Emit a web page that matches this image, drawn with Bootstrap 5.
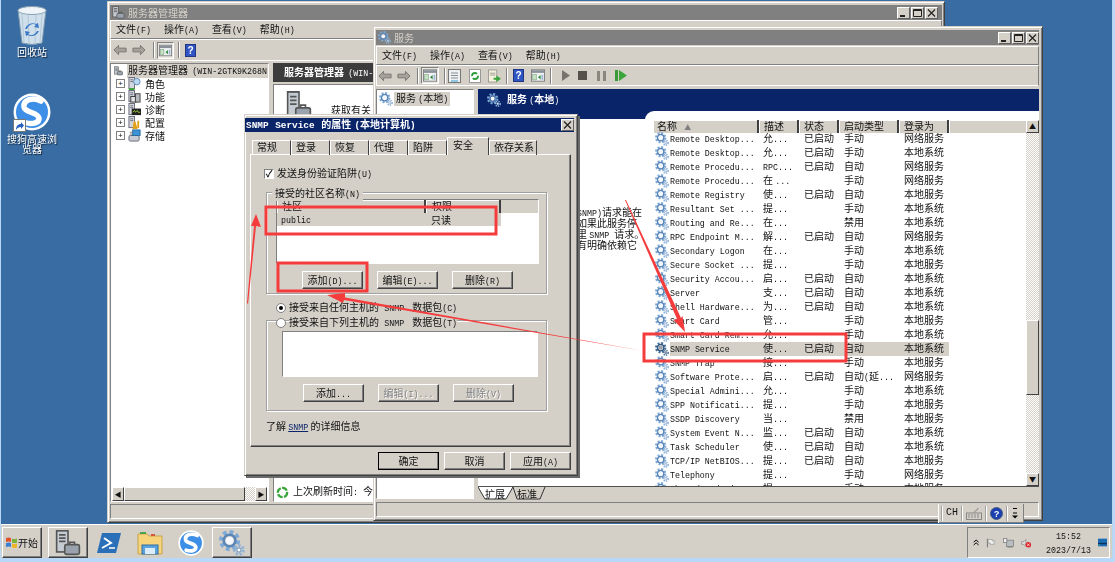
<!DOCTYPE html>
<html lang="zh-CN">
<head>
<meta charset="UTF-8" />
<title>SNMP Service</title>
<link href="https://cdn.jsdelivr.net/npm/bootstrap@5.3.0/dist/css/bootstrap.min.css" rel="stylesheet">
<style>
  html, body { margin: 0; height: 100%; overflow: hidden; }
  body { background: #b9d7f7; font: 10px/12px "Noto Sans CJK SC", sans-serif; color: #111; }
  .lat { font: 8.3px/12px "Liberation Mono", monospace; }
  .screen { width: 1115px; height: 562px; padding: 0 3px 4px 1px; filter: blur(.3px); }
  .desk { height: 524px; background: #396ca3; }
  .deskitem { left: 0; width: 62px; color: #fff; text-align: center; text-shadow: 1px 1px 1px #123; }

  .win { background: #d4d0c8; border: 1px solid; border-color: #d4d0c8 #404040 #404040 #d4d0c8; box-shadow: inset 1px 1px #fff, inset -1px -1px #808080; padding: 3px 2px; }
  .win-sm { left: 106px; top: 1px; width: 838px; height: 522px; }
  .win-svc { left: 372px; top: 26px; width: 670px; height: 495px; padding-right: 3px; }
  .tbar { height: 15px; flex: none; background: #808080; color: #d4d0c8; padding-left: 2px; gap: 3px; }
  .wbtn { width: 13px; height: 12px; background: #d4d0c8; border: 1px solid; border-color: #fff #606060 #606060 #fff; padding: 0; display: flex; align-items: center; justify-content: center; }
  .wbtns { gap: 1px; }
  .mbar { height: 19px; flex: none; border: 1px solid; border-color: #fff #808080 #808080 #fff; padding-left: 5px; gap: 13px; }
  .tools { flex: none; border: 1px solid; border-color: #fff #808080 #fff #fff; }
  .sep { width: 2px; height: 16px; border-left: 1px solid #808080; border-right: 1px solid #fff; flex: none; }
  .pressed { background: #e8e6e0; border: 1px solid; border-color: #808080 #fff #fff #808080; padding: 1px; }
  .sunk { background: #fff; border: 1px solid; border-color: #808080 #fff #fff #808080; }
  .status { height: 15px; flex: none; border: 1px solid; border-color: #808080 #fff #fff #808080; }
  .tree-row { height: 13px; padding-left: 5px; }
  .expand { width: 9px; height: 9px; border: 1px solid #808080; font: 8px/7px "Liberation Mono", monospace; text-align: center; margin-right: 3px; background: #fff; }
  .smhead { height: 19px; background: #3c3c3c; color: #fff; font-weight: 700; padding-left: 11px; word-spacing: 2px; }
  .sbtn { background: #d4d0c8; border: 1px solid; border-color: #fff #404040 #404040 #fff; flex: none; }
  .track { background-color: #e8e6e0; background-image: repeating-conic-gradient(#d4d0c8 0 25%, #fff 0 50%); background-size: 2px 2px; }

  .navyhead { height: 22px; background: #0a246a; color: #fff; font-weight: 700; padding-left: 9px; gap: 6px; flex: none; }
  .descol { width: 167px; flex: none; }
  .descol-top { height: 8px; background: #0a246a; }
  .desc-text { padding: 87px 0 0 99px; white-space: nowrap; overflow: hidden; }
  .desc-line { height: 11px; line-height: 11px; }
  .desc-line .lat { line-height: 11px; }
  .listwrap { background: #0a246a; }
  .listbox { background: #fff; border-top-left-radius: 9px; padding-top: 9px; }
  .lhead { height: 13px; background: #d4d0c8; flex: none; }
  .lh { height: 13px; line-height: 11px; border-right: 2px solid #404040; padding-left: 5px; box-shadow: inset 1px 1px #fff; }
  .lrow { height: 14px; flex: none; white-space: nowrap; }
  .hd1 { width: 106px; padding-left: 4px; } .hd2 { width: 40px; } .hd3 { width: 40px; } .hd4 { width: 60px; } .hd5 { width: 50px; }
  .r1 { width: 105px; } .r2 { width: 41px; } .r3 { width: 40px; } .r4 { width: 60px; } .r5 { width: 51px; }
  .lcell { padding-left: 6px; flex: none; }
  .ic1 { padding-left: 3px; gap: 1px; }
  .selbg { background: #d4d0c8; }
  .gear-sel { filter: brightness(.65) saturate(1.4); }
  .tabrow { height: 13px; flex: none; border-top: 1px solid #505050; padding-top: 1px; }

  .dlg { left: 243px; top: 114px; width: 334px; height: 362px; background: #d4d0c8; border: 1px solid; border-color: #d4d0c8 #404040 #404040 #d4d0c8; box-shadow: inset 1px 1px #fff, inset -1px -1px #808080, 2px 2px 0 #6a6a6a; padding: 3px 3px 3px 0; }
  .dlgtitle { height: 14px; background: #0a246a; color: #fff; font-weight: 700; padding-left: 1px; word-spacing: 1px; }
  .dlgtitle .lat { font-weight: 700; font-size: 9.400px; }
  .dtabs { margin: 5px 0 0 7px; height: 17px; position: relative; z-index: 1; }
  .dtab { width: 39px; height: 15px; margin-top: 3px; border: 1px solid; border-color: #fff #404040 transparent #fff; border-bottom: 0; padding-left: 4px; line-height: 12px; flex: none; }
  .dtab-on { height: 18px; margin-top: 0; width: 42px; background: #d4d0c8; line-height: 14px; padding-left: 5px; }
  .dtab-wide { width: 48px; }
  .dpanel { margin: 0 0 0 5px; width: 321px; height: 293px; border: 1px solid; border-color: #fff #404040 #404040 #fff; box-shadow: inset -1px -1px #808080; padding-top: 13px; }
  .chk { width: 10px; height: 10px; background: #fff; border: 1px solid; border-color: #808080 #fff #fff #808080; font: bold 9px/8px "Liberation Sans", sans-serif; text-align: center; margin-right: 3px; }
  .grp { margin-left: 15px; width: 281px; border: 1px solid #a0a0a0; box-shadow: 1px 1px #fff, inset 1px 1px #fff; padding-left: 9px; }
  .grp-a { margin-top: 12px; height: 102px; padding-top: 6px; }
  .grp-b { margin-top: -9px; height: 91px; padding-top: 10px; }
  .legend { left: 5px; top: -6px; background: #d4d0c8; padding: 0 3px; }
  .lv { width: 263px; height: 65px; }
  .lvh { height: 13px; background: #d4d0c8; }
  .lvsel { height: 13px; width: 224px; background: #d4d0c8; }
  .xbtn { height: 18px; width: 61px; background: #d4d0c8; border: 1px solid; border-color: #fff #404040 #404040 #fff; box-shadow: inset -1px -1px #808080; text-align: center; line-height: 14px; padding: 0; color: #111; font-size: 10px; }
  .xbtn-off { color: #808080; text-shadow: 1px 1px #fff; }
  .xbtn-def { outline: 1px solid #000; outline-offset: -1px; border-color: #fff #000 #000 #fff; }
  .radio { width: 10px; height: 10px; border-radius: 50%; background: #fff; border: 1px solid #808080; margin-right: 3px; position: relative; flex: none; }
  .radio-on::after { content: ""; position: absolute; left: 2px; top: 2px; width: 4px; height: 4px; border-radius: 50%; background: #000; }
  .rrow { height: 13px; padding-left: 25px; position: relative; z-index: 1; width: max-content; word-spacing: 3px; }
  .rrow-b { margin-top: 2px; }
  .rrow > span:last-child { background: #d4d0c8; }
  .snmplink { color: #0a246a; text-decoration: underline; }

  .langbar { left: 938px; top: 504px; width: 85px; height: 19px; background: #d4d0c8; gap: 3px; padding-left: 2px; border-right: 1px solid #808080; border-bottom: 1px solid #808080; box-shadow: -1px 0 #fff; }
  .langbar .lat { font-size: 10px; width: 12px; display: block; }
  .langsep { width: 2px; height: 15px; border-left: 1px solid #a0a0a0; border-right: 1px solid #fff; }
  .taskbar { height: 34px; background: #d4d0c8; box-shadow: inset 0 1px #fff, 0 -1px #9a9a9a; padding: 3px 2px 0 1px; }
  .tb { height: 31px; background: #d4d0c8; border: 1px solid; border-color: #fff #404040 #404040 #fff; box-shadow: inset -1px -1px #808080; }
  .tray { width: 143px; height: 31px; border: 1px solid; border-color: #808080 #fff #fff #808080; gap: 7px; padding-left: 5px; }
  .clock { margin: 1px 0 0 8px; }
  .overlay { left: 0; top: 0; z-index: 5; pointer-events: none; }
</style>
</head>
<body>

<svg width="0" height="0" class="position-absolute">
  <defs>
    <symbol id="gear" viewBox="0 0 16 16">
      <circle cx="6.500" cy="6.500" r="5" fill="none" stroke="#7fa9d6" stroke-width="3" stroke-dasharray="2.200 1.700"/>
      <circle cx="6.500" cy="6.500" r="3.600" fill="none" stroke="#5a87b8" stroke-width="1.600"/>
      <circle cx="6.500" cy="6.500" r="2.400" fill="#f4f8fc"/>
      <circle cx="12.300" cy="12.300" r="2.700" fill="none" stroke="#8fb3d9" stroke-width="1.800" stroke-dasharray="1.400 1"/>
      <circle cx="12.300" cy="12.300" r="1.300" fill="#fff" stroke="#5a87b8" stroke-width=".6"/>
    </symbol>
    <symbol id="server" viewBox="0 0 16 16">
      <rect x="1" y="0.500" width="7" height="13" fill="#c5cbd2" stroke="#555"/>
      <path d="M2.500 3h4M2.500 5h4M2.500 7h4" stroke="#555"/>
      <rect x="6" y="9" width="9" height="6" rx="1" fill="#9aa3ad" stroke="#555"/>
      <path d="M9 9V7.500h3V9" fill="none" stroke="#555"/>
    </symbol>
    <symbol id="tower" viewBox="0 0 14 14">
      <rect x="1" y=".5" width="6" height="12" fill="#d3d8de" stroke="#667"/>
      <path d="M2.500 3h3M2.500 5h3" stroke="#667"/>
    </symbol>
    <symbol id="t-role" viewBox="0 0 14 14"><use href="#tower"/><circle cx="9.500" cy="5" r="3.500" fill="#bcd7f0" stroke="#5a87b8"/><path d="M1 13h6" stroke="#3aa53a" stroke-width="2"/></symbol>
    <symbol id="t-feat" viewBox="0 0 14 14"><use href="#tower"/><rect x="3" y="7" width="6" height="6" fill="#dfe3e8" stroke="#333"/><rect x="8" y="4" width="5" height="9" fill="#b3b8be" stroke="#444"/></symbol>
    <symbol id="t-diag" viewBox="0 0 14 14"><use href="#tower"/><rect x="4" y="6" width="10" height="7" fill="#222"/><path d="M5 10l2-2 1 2 2-2 1 2h2" fill="none" stroke="#9ccf3a"/></symbol>
    <symbol id="t-conf" viewBox="0 0 14 14"><use href="#tower"/><path d="M7 6l2 7h-3zM11 5v8" stroke="#e2a21c" stroke-width="2" fill="#e2a21c"/></symbol>
    <symbol id="t-stor" viewBox="0 0 14 14"><rect x="1" y="7" width="11" height="6" rx="1.500" fill="#c7ccd2" stroke="#667"/><rect x="5" y="1" width="8" height="6" fill="#3c93d6" stroke="#26689c"/><path d="M2 3.500h3M2 5.500h3" stroke="#777"/></symbol>
    <symbol id="back" viewBox="0 0 15 12">
      <path d="M1 6 6 1v3h8v4H6v3z" fill="#a5a29c" stroke="#77746e"/>
    </symbol>
    <symbol id="fwd" viewBox="0 0 15 12">
      <path d="M14 6 9 1v3H1v4h8v3z" fill="#a5a29c" stroke="#77746e"/>
    </symbol>
    <symbol id="panel" viewBox="0 0 16 14">
      <rect x=".5" y=".5" width="15" height="13" fill="#f0f2f4" stroke="#777"/>
      <rect x="1" y="1" width="14" height="3" fill="#8a9099"/>
      <rect x="2" y="6" width="4" height="6" fill="#c7e0c7" stroke="#6a9a6a" stroke-width=".6"/>
      <path d="M8 9l3-2.500v5z" fill="#2d8a3a"/>
      <rect x="12" y="6" width="2" height="6" fill="#9fb7d0"/>
    </symbol>
    <symbol id="help" viewBox="0 0 12 14">
      <rect x=".5" y=".5" width="11" height="13" fill="#2f55c4" stroke="#1b2f7c"/>
      <text x="6" y="11" font-family="Liberation Sans" font-size="11" font-weight="700" fill="#fff" text-anchor="middle">?</text>
    </symbol>
    <symbol id="sogou" viewBox="0 0 38 38">
      <circle cx="19" cy="19" r="18.500" fill="#fff"/>
      <circle cx="19" cy="19" r="16" fill="#3c8ee6"/>
      <path d="M28 8C20 3.500 10 7 11 14c1 6 14 5 15 11 .6 4.500-6 7-14 4.500" fill="none" stroke="#fff" stroke-width="5.500" stroke-linecap="round"/>
    </symbol>
    <symbol id="w-min" viewBox="0 0 9 8"><rect x="1" y="6" width="5" height="2" fill="#222"/></symbol>
    <symbol id="w-max" viewBox="0 0 9 8"><path d="M.5.500h8v7h-8z" fill="none" stroke="#222"/><path d="M0 1.500h9" stroke="#222"/></symbol>
    <symbol id="w-close" viewBox="0 0 9 8"><path d="M1 .5l7 7M8 .5l-7 7" stroke="#222" stroke-width="1.200"/></symbol>
  </defs>
</svg>

<div class="screen">
  <div class="desk position-relative">

    <div class="deskitem position-absolute" style="top:5px">
      <svg width="32" height="40" viewBox="0 0 32 40" class="d-block mx-auto">
        <path d="M2 5 30 5 26 38Q16 41 6 38Z" fill="#cfe0ec" stroke="#7d98ad"/>
        <ellipse cx="16" cy="5.500" rx="14" ry="4" fill="#eef4f8" stroke="#8aa3b6"/>
        <path d="M6 9l2 28M12 10l1 28M20 10l-1 28M26 9l-2 28" stroke="#a9c0d1" stroke-width=".8"/>
        <path d="M11 24a6 6 0 0 1 9-4l-2 2 5 1-1-5-2 1a8 8 0 0 0-11 5zM21 26a6 6 0 0 1-9 3l2-2-5-1 1 5 2-1a8 8 0 0 0 11-4z" fill="#3d78c4"/>
      </svg>
      <div style="margin-top:1px">回收站</div>
    </div>
    <div class="deskitem position-absolute" style="top:93px">
      <svg width="38" height="38" class="d-block mx-auto"><use href="#sogou"/></svg>
      <svg width="13" height="13" viewBox="0 0 13 13" class="position-absolute" style="left:12px;top:26px">
        <rect x=".5" y=".5" width="12" height="12" fill="#fff" stroke="#777"/>
        <path d="M3 11c0-4 2-6 5-6V3l3 3.500L8 10V8c-2 0-4 1-5 3z" fill="#2b62c0"/>
      </svg>
      <div class="lh-1" style="margin-top:3px">搜狗高速浏<br>览器</div>
    </div>

    <!-- server manager window -->
    <div class="win win-sm position-absolute d-flex flex-column">
      <div class="tbar d-flex align-items-center">
        <svg width="13" height="13"><use href="#server"/></svg><span>服务器管理器</span>
        <div class="wbtns d-flex ms-auto me-1">
          <button class="wbtn"><svg width="9" height="8"><use href="#w-min"/></svg></button>
          <button class="wbtn"><svg width="9" height="8"><use href="#w-max"/></svg></button>
          <button class="wbtn"><svg width="9" height="8"><use href="#w-close"/></svg></button>
        </div>
      </div>
      <div class="mbar d-flex align-items-center">
        <span>文件(F)</span><span>操作(A)</span><span>查看(V)</span><span>帮助(H)</span>
      </div>
      <div class="tools d-flex align-items-center" style="height:22px;padding-left:2px">
        <svg width="14" height="12"><use href="#back"/></svg>
        <svg width="14" height="12" style="margin-left:5px"><use href="#fwd"/></svg>
        <div class="sep" style="margin:0 2px 0 7px"></div>
        <div class="pressed d-flex"><svg width="13" height="13"><use href="#panel"/></svg></div>
        <div class="sep" style="margin:0 5px 0 4px"></div>
        <svg width="11" height="13"><use href="#help"/></svg>
      </div>
      <div class="d-flex flex-grow-1" style="margin-top:2px;min-height:0">
        <div class="sunk d-flex flex-column" style="width:159px">
          <div class="d-flex align-items-center" style="height:14px;white-space:nowrap;overflow:hidden;padding-left:3px;margin-bottom:-1px;word-spacing:2px">
            <svg width="14" height="14" class="flex-none me-1"><use href="#server"/></svg>
            <span class="selbg" style="padding:0 1px">服务器管理器 (WIN-2GTK9K268N</span>
          </div>
          <div class="tree-row d-flex align-items-center"><span class="expand">+</span><svg width="13" height="13" class="me-1"><use href="#t-role"/></svg>角色</div>
          <div class="tree-row d-flex align-items-center"><span class="expand">+</span><svg width="13" height="13" class="me-1"><use href="#t-feat"/></svg>功能</div>
          <div class="tree-row d-flex align-items-center"><span class="expand">+</span><svg width="13" height="13" class="me-1"><use href="#t-diag"/></svg>诊断</div>
          <div class="tree-row d-flex align-items-center"><span class="expand">+</span><svg width="13" height="13" class="me-1"><use href="#t-conf"/></svg>配置</div>
          <div class="tree-row d-flex align-items-center"><span class="expand">+</span><svg width="13" height="13" class="me-1"><use href="#t-stor"/></svg>存储</div>
          <div class="d-flex mt-auto" style="height:14px;padding:0 1px">
            <div class="sbtn text-center" style="width:12px;font-size:7px">◀</div>
            <div class="sbtn" style="width:121px"></div>
            <div class="track flex-grow-1"></div>
            <div class="sbtn text-center" style="width:12px;font-size:7px">▶</div>
          </div>
        </div>
        <div class="d-flex flex-column flex-grow-1" style="margin-left:4px;min-width:0">
          <div class="smhead d-flex align-items-center flex-none"><span>服务器管理器 (WIN-2GTK9K268N)</span></div>
          <div class="sunk flex-grow-1 d-flex flex-column" style="margin-top:2px;padding:6px 0 0 12px">
            <div class="d-flex align-items-start">
              <svg width="26" height="30" viewBox="0 0 16 16" preserveAspectRatio="none"><use href="#server"/></svg>
              <span style="margin:13px 0 0 19px">获取有关</span>
            </div>
            <div class="d-flex align-items-center mt-auto" style="margin-left:-10px;height:18px;gap:4px">
              <svg width="13" height="13" viewBox="0 0 14 14"><circle cx="7" cy="7" r="5" fill="none" stroke="#3aa53a" stroke-width="2.500" stroke-dasharray="6 1.500"/></svg>
              <span>上次刷新时间: 今天 15:40</span>
            </div>
          </div>
        </div>
      </div>
      <div class="status" style="margin-top:2px"></div>
    </div>

    <!-- services window -->
    <div class="win win-svc position-absolute d-flex flex-column">
      <div class="tbar d-flex align-items-center">
        <svg width="13" height="13"><use href="#gear"/></svg><span>服务</span>
        <div class="wbtns d-flex ms-auto">
          <button class="wbtn"><svg width="9" height="8"><use href="#w-min"/></svg></button>
          <button class="wbtn"><svg width="9" height="8"><use href="#w-max"/></svg></button>
          <button class="wbtn"><svg width="9" height="8"><use href="#w-close"/></svg></button>
        </div>
      </div>
      <div class="mbar d-flex align-items-center" style="margin-top:1px">
        <span>文件(F)</span><span>操作(A)</span><span>查看(V)</span><span>帮助(H)</span>
      </div>
      <div class="tools d-flex align-items-center" style="height:21px;padding-left:1px">
        <svg width="14" height="12"><use href="#back"/></svg>
        <svg width="14" height="12" style="margin-left:5px"><use href="#fwd"/></svg>
        <div class="sep" style="margin:0 2px 0 6px"></div>
        <div class="pressed d-flex"><svg width="14" height="13"><use href="#panel"/></svg></div>
        <div class="sep" style="margin:0 2px 0 5px"></div>
        <svg width="13" height="14" viewBox="0 0 13 14"><rect x=".5" y=".5" width="12" height="13" fill="#eef0f2" stroke="#777"/><path d="M3 4h7M3 6.500h7M3 9h7" stroke="#8a9099"/><path d="M3 12h7" stroke="#39a0d8"/></svg>
        <svg width="12" height="14" viewBox="0 0 12 14" style="margin-left:8px"><rect x=".5" y=".5" width="11" height="13" fill="#fff" stroke="#999"/><circle cx="6" cy="7" r="3" fill="none" stroke="#2f9e3a" stroke-width="1.800" stroke-dasharray="7 2"/></svg>
        <svg width="13" height="14" viewBox="0 0 14 14" style="margin-left:7px"><rect x=".5" y=".5" width="9" height="13" fill="#f6f1da" stroke="#999"/><path d="M2 4h6M2 6h6" stroke="#999"/><path d="M6 9h3V6.500l5 3.500-5 3.500V11H6z" fill="#3aa53a"/></svg>
        <div class="sep" style="margin:0 5px 0 5px"></div>
        <svg width="11" height="13"><use href="#help"/></svg>
        <svg width="14" height="13" style="margin-left:7px"><use href="#panel"/></svg>
        <div class="sep" style="margin:0 9px 0 5px"></div>
        <svg width="9" height="11" viewBox="0 0 9 11"><path d="M1 0l8 5.500-8 5.500z" fill="#77746e"/></svg>
        <svg width="9" height="9" viewBox="0 0 9 9" style="margin-left:8px"><rect width="9" height="9" fill="#55524c"/></svg>
        <svg width="9" height="10" viewBox="0 0 9 10" style="margin-left:10px"><path d="M0 0h3v10H0zM6 0h3v10H6z" fill="#8a877f"/></svg>
        <svg width="12" height="11" viewBox="0 0 12 11" style="margin-left:9px"><path d="M0 0h3v11H0z" fill="#3a9a3a"/><path d="M4 0l8 5.500-8 5.500z" fill="#3aa53a"/></svg>
      </div>
      <div class="d-flex flex-grow-1" style="margin-top:3px;min-height:0">
        <div class="d-flex flex-column" style="width:98px">
          <div class="sunk flex-grow-1" style="padding:2px 0 0 2px">
            <div class="d-flex align-items-center" style="gap:1px">
              <svg width="14" height="14"><use href="#gear"/></svg><span class="selbg" style="padding:0 2px">服务 (本地)</span>
            </div>
          </div>
        </div>
        <div class="d-flex flex-column flex-grow-1" style="margin-left:4px;min-width:0">
          <div class="navyhead d-flex align-items-center">
            <svg width="14" height="14"><use href="#gear"/></svg><span>服务 (本地)</span>
          </div>
          <div class="d-flex flex-grow-1" style="min-height:0">
            <div class="descol bg-white d-flex flex-column">
              <div class="descol-top"></div>
              <div class="desc-text">
                <div class="desc-line">SNMP)请求能在</div>
                <div class="desc-line">如果此服务停</div>
                <div class="desc-line">里 SNMP 请求。</div>
                <div class="desc-line">有明确依赖它</div>
              </div>
            </div>
            <div class="listwrap flex-grow-1 d-flex" style="min-width:0">
              <div class="listbox flex-grow-1 d-flex" style="min-width:0">
                <div class="flex-grow-1 d-flex flex-column" style="min-width:0;overflow:hidden">
                  <div class="lhead d-flex" style="margin-left:8px">
                    <div class="lh hd1 flex-none">名称 <span style="color:#808080;margin-left:5px;font-size:7px">▲</span></div>
                    <div class="lh hd2 flex-none">描述</div>
                    <div class="lh hd3 flex-none">状态</div>
                    <div class="lh hd4 flex-none">启动类型</div>
                    <div class="lh hd5 flex-none">登录为</div>
                    <div class="flex-grow-1" style="box-shadow:inset 1px 1px #fff"></div>
                  </div>
                  <div id="svc-list" class="d-flex flex-column" style="margin:-1px 0 0 7px"></div>
                </div>
                <div class="d-flex flex-column track" style="width:13px">
                  <div class="sbtn text-center" style="height:13px;font-size:7px;line-height:11px">▲</div>
                  <div style="height:187px"></div>
                  <div class="sbtn" style="height:75px"></div>
                  <div class="flex-grow-1"></div>
                  <div class="sbtn text-center" style="height:13px;font-size:7px;line-height:11px">▼</div>
                </div>
              </div>
            </div>
          </div>
          <div class="tabrow d-flex position-relative">
            <svg width="70" height="13" class="position-absolute top-0 start-0">
              <path d="M0 0 7 12H28L35 0z" fill="#fff"/>
              <path d="M0 0 7 12H28L35 0" fill="none" stroke="#333"/>
              <path d="M35 0 39 12H62L67 0" fill="none" stroke="#333"/>
            </svg>
            <span class="position-relative" style="margin-left:7px;width:32px">扩展</span>
            <span class="position-relative">标准</span>
          </div>
        </div>
      </div>
      <div class="status" style="margin-top:3px"></div>
    </div>

    <!-- language bar over the services window -->
    <div class="langbar position-absolute d-flex align-items-center">
      <div class="langsep"></div>
      <span>CH</span>
      <div class="langsep"></div>
      <svg width="16" height="13" viewBox="0 0 16 13"><rect x=".5" y="6" width="15" height="6.500" fill="#d4d0c8" stroke="#888"/><path d="M2 8h12M2 10h12" stroke="#888" stroke-dasharray="2 1"/><path d="M8 6C8 3 12 4 12 1" fill="none" stroke="#888"/></svg>
      <div class="langsep"></div>
      <svg width="13" height="13" viewBox="0 0 14 14"><circle cx="7" cy="7" r="6.500" fill="#1b3fb0" stroke="#4c5f7a"/><text x="7" y="10.500" font-family="Liberation Sans" font-size="10" font-weight="700" fill="#fff" text-anchor="middle">?</text></svg>
      <div class="langsep"></div>
      <svg width="8" height="12" viewBox="0 0 8 12"><path d="M2 1.500h4M2 6h4" stroke="#000"/><path d="M1 8.500h6l-3 3z" fill="#000"/></svg>
    </div>

    <!-- properties dialog -->
    <div class="dlg position-absolute">
      <div class="dlgtitle d-flex align-items-center">
        <span>SNMP Service 的属性 (本地计算机)</span>
        <button class="wbtn ms-auto"><svg width="9" height="8"><use href="#w-close"/></svg></button>
      </div>
      <div class="dtabs d-flex">
        <div class="dtab">常规</div><div class="dtab">登录</div><div class="dtab">恢复</div><div class="dtab">代理</div><div class="dtab">陷阱</div>
        <div class="dtab dtab-on">安全</div><div class="dtab dtab-wide">依存关系</div>
      </div>
      <div class="dpanel">
        <div class="d-flex align-items-center" style="padding-left:13px;height:12px">
          <span class="chk">✓</span><span>发送身份验证陷阱(U)</span>
        </div>
        <div class="grp grp-a position-relative">
          <span class="legend position-absolute">接受的社区名称(N)</span>
          <div class="sunk lv">
            <div class="lvh d-flex">
              <div class="lh flex-none" style="width:149px">社区</div>
              <div class="lh flex-none" style="width:75px;padding-left:6px">权限</div>
            </div>
            <div class="lvsel d-flex align-items-center">
              <span style="width:154px;padding-left:4px">public</span><span>只读</span>
            </div>
          </div>
          <div class="d-flex" style="margin:7px 0 0 26px;gap:14px">
            <button class="xbtn">添加(D)...</button>
            <button class="xbtn">编辑(E)...</button>
            <button class="xbtn">删除(R)</button>
          </div>
        </div>
        <div class="rrow d-flex align-items-center" style="margin-top:7px"><span class="radio radio-on"></span><span>接受来自任何主机的 SNMP 数据包(C)</span></div>
        <div class="rrow rrow-b d-flex align-items-center"><span class="radio"></span><span>接受来自下列主机的 SNMP 数据包(T)</span></div>
        <div class="grp grp-b">
          <div class="sunk" style="margin-left:6px;width:256px;height:46px"></div>
          <div class="d-flex" style="margin:7px 0 0 27px;gap:14px">
            <button class="xbtn">添加...</button>
            <button class="xbtn xbtn-off">编辑(I)...</button>
            <button class="xbtn xbtn-off">删除(V)</button>
          </div>
        </div>
        <div style="margin:9px 0 0 15px">了解 <a class="snmplink" href="#">SNMP</a> 的详细信息</div>
      </div>
      <div class="d-flex justify-content-end" style="margin:5px 3px 0 0;gap:5px">
        <button class="xbtn xbtn-def">确定</button>
        <button class="xbtn">取消</button>
        <button class="xbtn">应用(A)</button>
      </div>
    </div>
  </div>

  <div class="taskbar d-flex">
    <div class="tb d-flex align-items-center" style="width:40px;padding-left:2px">
      <svg width="13" height="13" viewBox="0 0 13 13"><path d="M1 2q3-1 5 0v4q-2-1-5 0z" fill="#e2532d"/><path d="M7 2.500q2 1 5 0v4q-3 1-5 0z" fill="#7bb33a"/><path d="M1 7q3-1 5 0v4q-2-1-5 0z" fill="#3a7fd0"/><path d="M7 7.500q2 1 5 0v4q-3 1-5 0z" fill="#f0b429"/></svg>
      <span>开始</span>
    </div>
    <div class="tb d-flex align-items-center justify-content-center" style="width:40px;margin-left:6px">
      <svg width="26" height="26" viewBox="0 0 16 16"><use href="#server"/></svg>
    </div>
    <div class="d-flex align-items-center justify-content-center" style="width:40px;margin-left:1px">
      <svg width="24" height="20" viewBox="0 0 24 20"><path d="M5 0H24L19 20H0z" fill="#2b6fb8"/><path d="M7 5l7 5-9 5" fill="none" stroke="#fff" stroke-width="2"/><path d="M12 15h6" stroke="#fff" stroke-width="1.500"/></svg>
    </div>
    <div class="d-flex align-items-center justify-content-center" style="width:40px;margin-left:1px">
      <svg width="26" height="24" viewBox="0 0 26 24"><path d="M1 3h9l2 2h13v18H1z" fill="#f5d47c" stroke="#c9a24a"/><path d="M3 1h6v2H3z" fill="#4aa54a"/><path d="M14 3h4v2h-4z" fill="#d9553a"/><rect x="5" y="14" width="16" height="9" fill="#5aa3dc" stroke="#2f6ea8"/><rect x="8" y="17" width="10" height="6" fill="#d9ecf8"/></svg>
    </div>
    <div class="d-flex align-items-center justify-content-center" style="width:38px;margin-left:2px">
      <svg width="26" height="26"><use href="#sogou"/></svg>
    </div>
    <div class="tb d-flex align-items-center justify-content-center" style="width:40px;margin-left:2px">
      <svg width="26" height="26"><use href="#gear"/></svg>
    </div>
    <div class="tray d-flex align-items-center ms-auto">
      <svg width="9" height="9" viewBox="0 0 9 9"><path d="M1 4l3.500-3L8 4M1 8l3.500-3L8 8" fill="none" stroke="#000" stroke-width="1.400"/></svg>
      <svg width="14" height="14" viewBox="0 0 14 14"><path d="M2 1v12" stroke="#777" stroke-width="1.500"/><path d="M3 2h6v2h4l-2 3 1 2H6V7H3z" fill="#eee" stroke="#999"/></svg>
      <svg width="15" height="14" viewBox="0 0 15 14"><rect x="5" y="3" width="10" height="9" fill="#b9bcc0" stroke="#777"/><rect x=".5" y=".5" width="5" height="6" fill="#eee" stroke="#777"/><path d="M6 13h8" stroke="#777"/></svg>
      <svg width="15" height="14" viewBox="0 0 15 14"><path d="M1 5h3l3-3v10L4 9H1z" fill="#ddd" stroke="#888"/><circle cx="10.500" cy="9.500" r="4" fill="#e0262a"/><path d="M8.800 7.800l3.400 3.400M12.200 7.800l-3.400 3.400" stroke="#fff"/></svg>
      <div class="clock text-center flex-grow-1 lh-sm">
        <div>15:52</div>
        <div>2023/7/13</div>
      </div>
      <svg width="13" height="11" viewBox="0 0 13 11" style="margin-right:2px"><rect width="13" height="11" fill="#1c6bb5"/><path d="M0 7h13" stroke="#0c2f5c" stroke-width="2"/><path d="M1 9h2" stroke="#6fe06f"/></svg>
    </div>
  </div>
</div>

<!-- red marks drawn on top of the screenshot -->
<svg class="overlay position-absolute" width="1115" height="562">
  <g fill="none" stroke="#f53c3c" stroke-width="3">
    <rect x="266" y="207" width="230" height="27"/>
    <rect x="278" y="263" width="89" height="28"/>
    <rect x="644" y="334" width="202" height="27"/>
  </g>
  <g fill="#f53c3c">
    <polygon points="644,351 345,297.500 345,293 327,295 343,303 344,300"/>
    <polygon points="247,303 248,304 256,226 261,227 256,214 251,226 254,226"/>
    <polygon points="625,200 626,200 681,318 682.500,316 685,332 673.500,320 677,319"/>
  </g>
</svg>

<script src="https://cdn.jsdelivr.net/npm/bootstrap@5.3.0/dist/js/bootstrap.bundle.min.js"></script>
<script>
const services = [
  'Remote Desktop...|允...|已启动|手动|网络服务',
  'Remote Desktop...|允...|已启动|手动|本地系统',
  'Remote Procedu...|RPC...|已启动|自动|网络服务',
  'Remote Procedu...|在 ...||手动|网络服务',
  'Remote Registry|使...|已启动|自动|本地服务',
  'Resultant Set ...|提...||手动|本地系统',
  'Routing and Re...|在...||禁用|本地系统',
  'RPC Endpoint M...|解...|已启动|自动|网络服务',
  'Secondary Logon|在...||手动|本地系统',
  'Secure Socket ...|提...||手动|本地服务',
  'Security Accou...|启...|已启动|自动|本地系统',
  'Server|支...|已启动|自动|本地系统',
  'Shell Hardware...|为...|已启动|自动|本地系统',
  'Smart Card|管...||手动|本地服务',
  'Smart Card Rem...|允...||手动|本地系统',
  'SNMP Service|使...|已启动|自动|本地系统',
  'SNMP Trap|接...||手动|本地服务',
  'Software Prote...|启...|已启动|自动(延...|网络服务',
  'Special Admini...|允...||手动|本地系统',
  'SPP Notificati...|提...||手动|本地服务',
  'SSDP Discovery|当...||禁用|本地服务',
  'System Event N...|监...|已启动|自动|本地系统',
  'Task Scheduler|使...|已启动|自动|本地系统',
  'TCP/IP NetBIOS...|提...|已启动|自动|本地服务',
  'Telephony|提...||手动|网络服务',
  'Thread Orderin...|提...||手动|本地服务'
];

const list = document.getElementById('svc-list');
services.forEach(line => {
  const [name, desc, state, start, logon] = line.split('|');
  const sel = name === 'SNMP Service';
  const row = document.createElement('div');
  row.className = 'lrow d-flex align-items-center';
  row.innerHTML = `
    <div class="r1 flex-none d-flex align-items-center ic1">
      <svg width="14" height="14" class="flex-none ${sel ? 'gear-sel' : ''}"><use href="#gear"/></svg>
      <span class="flex-grow-1 ${sel ? 'selbg' : ''}">${name}</span>
    </div>
    <div class="d-flex ${sel ? 'selbg' : ''}">
      <div class="lcell r2">${desc}</div><div class="lcell r3">${state}</div>
      <div class="lcell r4">${start}</div><div class="lcell r5">${logon}</div>
    </div>`;
  list.appendChild(row);
});

// latin text is narrower than the CJK text, so every ASCII run gets its own span
const walker = document.createTreeWalker(document.querySelector('.screen'), NodeFilter.SHOW_TEXT);
const nodes = [];
while (walker.nextNode()) {
  const n = walker.currentNode;
  if (n.parentElement.closest('svg, .expand')) continue;
  if (/[\x21-\x7e]/.test(n.nodeValue)) nodes.push(n);
}
nodes.forEach(n => {
  const box = document.createElement('span');
  box.innerHTML = n.nodeValue.trim().replace(/[\x21-\x7e][\x20-\x7e]*/g, m => `<span class="lat">${m}</span>`);
  n.replaceWith(...box.childNodes);
});
</script>
</body>
</html>
